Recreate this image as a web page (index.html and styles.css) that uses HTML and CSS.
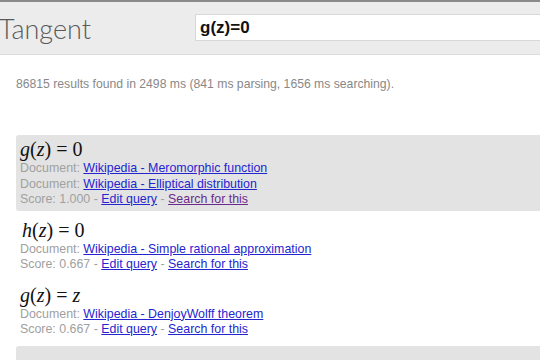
FILE: index.html
```html
<!DOCTYPE html>
<html>
<head>
<meta charset="utf-8">
<link rel="stylesheet" href="styles.css">
</head>
<body>
<header class="header">
  <div class="logo">Tangent</div>
  <div class="search"><span class="query">g(z)=0</span></div>
</header>
<main class="content">
  <p class="stats">86815 results found in 2498 ms (841 ms parsing, 1656 ms searching).</p>
  <div class="results">
    <div class="result result-hl">
      <div class="formula"><i>g</i>(<i>z</i>) = 0</div>
      <div class="line"><span class="label">Document: </span><a class="link" href="#">Wikipedia - Meromorphic function</a></div>
      <div class="line"><span class="label">Document: </span><a class="link" href="#">Wikipedia - Elliptical distribution</a></div>
      <div class="line"><span class="label">Score: 1.000 - </span><a class="link" href="#">Edit query</a><span class="label"> - </span><a class="link visited" href="#">Search for this</a></div>
    </div>
    <div class="result">
      <div class="formula indent"><i>h</i>(<i>z</i>) = 0</div>
      <div class="line"><span class="label">Document: </span><a class="link" href="#">Wikipedia - Simple rational approximation</a></div>
      <div class="line"><span class="label">Score: 0.667 - </span><a class="link" href="#">Edit query</a><span class="label"> - </span><a class="link" href="#">Search for this</a></div>
    </div>
    <div class="result">
      <div class="formula"><i>g</i>(<i>z</i>) = <i>z</i></div>
      <div class="line"><span class="label">Document: </span><a class="link" href="#">Wikipedia - DenjoyWolff theorem</a></div>
      <div class="line"><span class="label">Score: 0.667 - </span><a class="link" href="#">Edit query</a><span class="label"> - </span><a class="link" href="#">Search for this</a></div>
    </div>
    <div class="result result-hl">
      <div class="formula">&nbsp;</div>
    </div>
  </div>
</main>
</body>
</html>
```
FILE: styles.css
```css
html, body {
  margin: 0;
  padding: 0;
  background: #fff;
  overflow: hidden;
  width: 540px;
  height: 360px;
}
body {
  font-family: "Liberation Sans", Arial, sans-serif;
}
.header {
  display: flex;
  align-items: center;
  height: 52px;
  background: #ececec;
  border-top: 2px solid #8a8a8a;
  border-bottom: 1px solid #dcdcdc;
}
.logo {
  font-family: Lato, "Open Sans", sans-serif;
  font-weight: 300;
  font-size: 27px;
  color: #5a5a5a;
  margin-left: -1px;
  width: 196px;
  line-height: 30px;
  margin-top: 1px;
}
.search {
  flex: 1;
  height: 25px;
  background: #fff;
  border: 1px solid #d8d8d8;
  border-right: none;
  display: flex;
  align-items: center;
  padding-left: 4px;
  margin-top: -1px;
}
.query {
  font-weight: bold;
  font-size: 17px;
  color: #111;
}
.content {
  padding-left: 16px;
}
.stats {
  margin: 22px 0 0 0;
  font-size: 12.2px;
  color: #888;
  line-height: 14px;
}
.results {
  margin-top: 44px;
  display: flex;
  flex-direction: column;
  gap: 5px;
}
.result {
  padding: 2px 4px 3px 4px;
  border-radius: 3px 0 0 3px;
}
.result-hl {
  background: #e3e3e3;
}
.formula {
  font-family: "Liberation Serif", "DejaVu Serif", serif;
  font-size: 20px;
  line-height: 24px;
  color: #111;
}
.formula.indent {
  padding-left: 2px;
}
.line {
  font-size: 12.4px;
  line-height: 15.5px;
  white-space: nowrap;
}
.label {
  color: #a0a0a0;
}
.link {
  color: #2525d0;
  text-decoration: underline;
}
.link.visited {
  color: #6a2a8c;
}
```
